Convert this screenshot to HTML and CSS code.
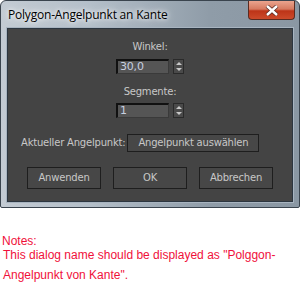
FILE: index.html
```html
<!DOCTYPE html>
<html>
<head>
    <meta charset="utf-8">
    <title>Polygon-Angelpunkt an Kante</title>
    <link rel="stylesheet" href="styles.css">
</head>
<body>
<div id="window">
    <div id="titlebar">
        <span id="title">Polygon-Angelpunkt an Kante</span>
        <div id="close">
            <svg width="14" height="11" viewBox="0 0 14 11">
                <path d="M2 1 L12 10 M12 1 L2 10" stroke="#5a2a22" stroke-width="4"/>
                <path d="M2 1 L12 10 M12 1 L2 10" stroke="#ffffff" stroke-width="2.4"/>
            </svg>
        </div>
    </div>
    <div id="client">
        <div class="field">
            <div class="label">Winkel:</div>
            <div class="spinrow">
                <div class="numbox">30,0</div>
                <div class="spinner"><span class="up"></span><span class="down"></span></div>
            </div>
        </div>
        <div class="field second">
            <div class="label">Segmente:</div>
            <div class="spinrow">
                <div class="numbox">1</div>
                <div class="spinner"><span class="up"></span><span class="down"></span></div>
            </div>
        </div>
        <div id="pivotrow">
            <span>Aktueller Angelpunkt:</span>
            <div class="button wide">Angelpunkt auswählen</div>
        </div>
        <div id="buttons">
            <div class="button">Anwenden</div>
            <div class="button">OK</div>
            <div class="button">Abbrechen</div>
        </div>
    </div>
</div>
<div id="notes">
    <div class="notes-head">Notes:</div>
    <div class="note">This dialog name should be displayed as "Polggon-Angelpunkt von Kante".</div>
</div>
</body>
</html>
```

FILE: styles.css
```css
body {
    margin: 0;
    background: #ffffff;
}
#window {
    width: 300px;
    height: 208px;
    box-sizing: border-box;
    border: 1px solid #3a444e;
    border-radius: 6px 6px 2px 2px;
    background: linear-gradient(to right, #c3cbd3 0%, #b4bfc9 30%, #8f9ca8 70%, #8a97a3 100%);
    display: flex;
    flex-direction: column;
}
#titlebar {
    height: 27px;
    display: flex;
    align-items: flex-start;
    justify-content: space-between;
}
#title {
    font-family: "Open Sans", "Noto Sans", sans-serif;
    font-size: 12px;
    letter-spacing: -0.2px;
    color: #000000;
    margin: 5px 0 0 7px;
    text-shadow: 0 0 8px #ffffff, 0 0 4px #ffffff;
}
#close {
    width: 47px;
    height: 19px;
    margin-right: 4px;
    box-sizing: border-box;
    border: 1px solid #5b2b20;
    border-top: none;
    border-radius: 0 0 4px 4px;
    background: linear-gradient(to bottom, #eaa48e 0%, #d67a60 45%, #bd3418 55%, #cc4a2a 100%);
    display: flex;
    align-items: center;
    justify-content: center;
}
#client {
    margin: 0 6px 5px 6px;
    flex: 1;
    background: #444444;
    border: 1px solid #2c3640;
    box-shadow: 0 0 0 1px #a8b4c0;
    font-family: "DejaVu Sans", sans-serif;
    font-size: 10px;
    line-height: 12px;
    letter-spacing: -0.2px;
    color: #c8c8c8;
    display: flex;
    flex-direction: column;
    align-items: center;
}
.field {
    display: flex;
    flex-direction: column;
    align-items: center;
    margin-top: 12px;
}
.field.second {
    margin-top: 12px;
}
.label {
    margin-bottom: 6px;
}
.second .label {
    margin-bottom: 5px;
}
.spinrow {
    display: flex;
    gap: 4px;
}
.numbox {
    width: 53px;
    height: 15px;
    box-sizing: border-box;
    background: #555555;
    border-top: 2px solid #111111;
    border-left: 2px solid #111111;
    border-right: 1px solid #3a3a3a;
    border-bottom: 1px solid #3a3a3a;
    color: #c8d0e0;
    padding-left: 2px;
    line-height: 12px;
    font-size: 11px;
}
.spinner {
    width: 11px;
    height: 15px;
    box-sizing: border-box;
    border: 1px solid #2a2a2a;
    background: #4a4a4a;
    display: flex;
    flex-direction: column;
    align-items: center;
    justify-content: space-around;
}
.up, .down {
    width: 0;
    height: 0;
    border-left: 3px solid transparent;
    border-right: 3px solid transparent;
}
.up {
    border-bottom: 3px solid #c8c8c8;
}
.down {
    border-top: 3px solid #c8c8c8;
}
#pivotrow {
    align-self: flex-start;
    margin: 16px 0 0 13px;
    display: flex;
    align-items: center;
    gap: 2px;
}
.button {
    width: 74px;
    height: 22px;
    box-sizing: border-box;
    border: 1px solid #1e1e1e;
    background: #474747;
    display: flex;
    align-items: center;
    justify-content: center;
}
.button.wide {
    width: 132px;
    height: 18px;
}
#buttons {
    margin-top: 15px;
    display: flex;
    gap: 12px;
}
#notes {
    font-family: "Liberation Sans", Arial, sans-serif;
    font-size: 12px;
    color: #f0103a;
    margin: 26px 0 0 2px;
}
.notes-head {
    line-height: 14px;
}
.note {
    width: 275px;
    margin: -3px 0 0 1px;
    line-height: 20px;
}
```
